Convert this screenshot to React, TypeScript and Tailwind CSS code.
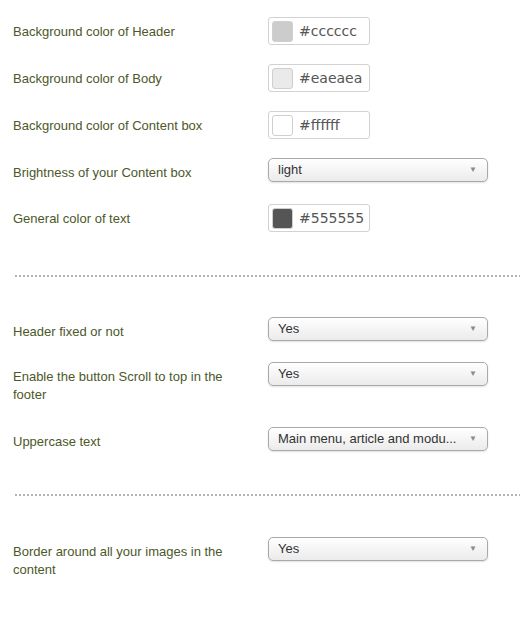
import React from 'react';

const labelCls = "w-[240px] text-[13px] leading-[18px] text-[#4c5829]";

const ColorField: React.FC<{ value: string }> = ({ value }) => (
  <div className="w-[102px] h-[28px] border border-[#d2d2d2] rounded-[3px] bg-white flex items-center pl-[3px] gap-[6px]">
    <span
      className="w-[21px] h-[21px] rounded-[3px] border border-[#cfcfcf] shrink-0"
      style={{ backgroundColor: value }}
    />
    <span className="text-[14px] text-[#555555] font-['DejaVu_Sans',sans-serif]">{value}</span>
  </div>
);

const SelectField: React.FC<{ value: string }> = ({ value }) => (
  <div className="w-[220px] h-[24px] border border-[#a9a9a9] rounded-[5px] bg-gradient-to-b from-white to-[#ebebeb] shadow-[0_1px_2px_rgba(0,0,0,0.12)] flex items-center pl-[9px] pr-[10px]">
    <span className="flex-1 whitespace-nowrap text-[13px] text-[#333333]">{value}</span>
    <span className="text-[8px] text-[#8a8a8a] ml-2">▼</span>
  </div>
);

const Row: React.FC<{ label: string; kind: 'color' | 'select'; value: string; className?: string }> = ({ label, kind, value, className }) => (
  <div className={"flex items-start " + (className ?? '')}>
    <div className="w-[255px] shrink-0">
      <div className={labelCls + ' pt-[6px]'}>{label}</div>
    </div>
    {kind === 'color' ? <ColorField value={value} /> : <SelectField value={value} />}
  </div>
);

const Divider: React.FC<{ className?: string }> = ({ className }) => (
  <div className={"ml-[2px] h-[2px] bg-[repeating-linear-gradient(to_right,#b4b4b4_0_2px,transparent_2px_4px)] " + (className ?? '')} />
);

export default function App() {
  return (
    <div className="w-[520px] h-[640px] bg-white pl-[13px] pt-[17px] font-['Liberation_Sans',Arial,sans-serif] overflow-hidden">
      <Row label="Background color of Header" kind="color" value="#cccccc" />
      <Row label="Background color of Body" kind="color" value="#eaeaea" className="mt-[19px]" />
      <Row label="Background color of Content box" kind="color" value="#ffffff" className="mt-[19px]" />
      <Row label="Brightness of your Content box" kind="select" value="light" className="mt-[19px]" />
      <Row label="General color of text" kind="color" value="#555555" className="mt-[22px]" />

      <Divider className="mt-[43px]" />

      <Row label="Header fixed or not" kind="select" value="Yes" className="mt-[40px]" />
      <Row label="Enable the button Scroll to top in the footer" kind="select" value="Yes" className="mt-[21px]" />
      <Row label="Uppercase text" kind="select" value="Main menu, article and modu..." className="mt-[23px]" />

      <Divider className="mt-[43px]" />

      <Row label="Border around all your images in the content" kind="select" value="Yes" className="mt-[41px]" />
    </div>
  );
}
